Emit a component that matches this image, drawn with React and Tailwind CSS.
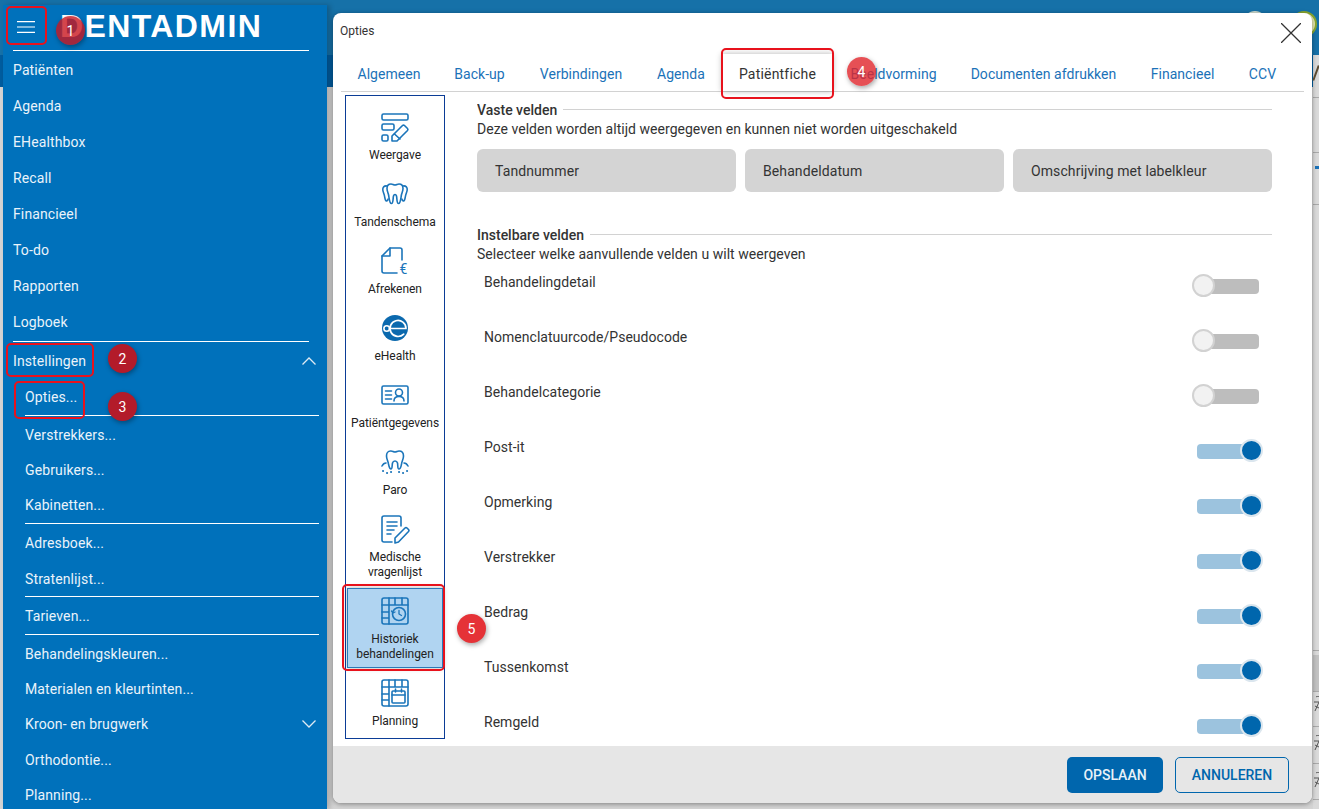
import React from 'react';

const menuTop = ['Patiënten', 'Agenda', 'EHealthbox', 'Recall', 'Financieel', 'To-do', 'Rapporten', 'Logboek'];

const tabs = [
  ['Algemeen', 'w-[96px]'],
  ['Back-up', 'w-[85px]'],
  ['Verbindingen', 'w-[118px]'],
  ['Agenda', 'w-[82px]'],
  ['Patiëntfiche', 'w-[111px]'],
  ['Beeldvorming', 'w-[121px]'],
  ['Documenten afdrukken', 'w-[179px]'],
  ['Financieel', 'w-[99px]'],
  ['CCV', 'w-[61px]'],
];

const fields = [
  ['Behandelingdetail', false],
  ['Nomenclatuurcode/Pseudocode', false],
  ['Behandelcategorie', false],
  ['Post-it', true],
  ['Opmerking', true],
  ['Verstrekker', true],
  ['Bedrag', true],
  ['Tussenkomst', true],
  ['Remgeld', true],
];

function Icon({ children }) {
  return (
    <svg viewBox="0 0 30 30" fill="none" stroke="#1b75ba" strokeWidth="1.6" strokeLinejoin="round" strokeLinecap="round" className="w-[30px] h-[30px] shrink-0">
      {children}
    </svg>
  );
}

const icons = {
  weergave: (
    <Icon>
      <rect x="2" y="2" width="26" height="6" rx="1.5" />
      <rect x="2" y="12" width="12" height="6" rx="1.5" />
      <rect x="2" y="23" width="6" height="6" rx="1.5" />
      <path d="M12 29v-5L22.500 13.500a1.500 1.500 0 0 1 2 0l3 3a1.500 1.500 0 0 1 0 2L17 29z" />
      <path d="M14.500 22l5.500 5" />
    </Icon>
  ),
  tand: (
    <Icon>
      <path d="M11 5c1.500 0 2.500 1 4 1s2.500-1 4-1c2.500 0 4 2 4 4.500 0 2.500-1.200 4.500-1.700 7-.4 2.500-.8 8-2.800 8s-1.300-5-2-7.500c-.3-1-.7-1.500-1.500-1.500s-1.200.5-1.500 1.500c-.7 2.500 0 7.500-2 7.500s-2.400-5.500-2.800-8C8.200 14 7 12 7 9.500 7 7 8.500 5 11 5z" />
      <path d="M7 7C4 6.500 2.500 8.500 2.800 11c.3 2.500 1.500 4 1.800 6.500.3 2 .5 4 1.700 4.500 1 .3 1.500-.8 1.800-2" />
      <path d="M23 7c3-.5 4.500 1.500 4.200 4-.3 2.500-1.500 4-1.800 6.500-.3 2-.5 4-1.700 4.500-1 .3-1.500-.8-1.800-2" />
    </Icon>
  ),
  afrekenen: (
    <Icon>
      <path d="M10 2h10a2 2 0 0 1 2 2v10M10 2L2 10v15a2 2 0 0 0 2 2h13" />
      <path d="M10 2v8H2" />
      <text x="19.500" y="28" fontSize="14" fill="#1b75ba" stroke="none" fontFamily="Roboto, sans-serif">€</text>
    </Icon>
  ),
  ehealth: (
    <Icon>
      <circle cx="15" cy="15" r="13" fill="#0b69ae" stroke="none" />
      <circle cx="6.700" cy="15.500" r="2.800" stroke="#fff" />
      <path d="M9.500 15.500H26a8 8 0 1 0-2.300 5.600" stroke="#fff" strokeWidth="1.700" />
    </Icon>
  ),
  patient: (
    <Icon>
      <rect x="2" y="6" width="26" height="18" rx="1.500" />
      <path d="M5.500 11h6M5.500 15h6M5.500 19h6" />
      <circle cx="19" cy="12.500" r="3.500" />
      <path d="M14 21c0-3 2-4.500 5-4.500s5 1.500 5 4.500" />
    </Icon>
  ),
  paro: (
    <Icon>
      <path d="M11 4c1.500 0 2.500 1 4 1s2.500-1 4-1c3 0 4.500 2 4.500 5 0 3-1.500 5-2 8-.4 2-.8 5-2.500 5s-1-4-1.500-6c-.3-1-1-2-2.500-2s-2.200 1-2.500 2c-.5 2-.1 6-1.500 6s-2.100-3-2.500-5c-.5-3-2-5-2-8 0-3 1.500-5 4-5z" />
      <path d="M2 19c1-2 2.500-3 4-3M28 19c-1-2-2.500-3-4-3" />
      <path d="M3 24h.1M7 26h.1M11 25h.1M19 25h.1M23 26h.1M27 24h.1" strokeWidth="2" />
    </Icon>
  ),
  medisch: (
    <Icon>
      <path d="M21 12V4a2 2 0 0 0-2-2H4a2 2 0 0 0-2 2v22a2 2 0 0 0 2 2h8" />
      <path d="M7 8h10M7 12h10M7 16h7M7 20h4" />
      <path d="M15 29v-5l10-10a1.500 1.500 0 0 1 2 0l1.500 1.500a1.500 1.500 0 0 1 0 2L18.500 28z" />
    </Icon>
  ),
  historiek: (
    <Icon>
      <path d="M11 28H4a2 2 0 0 1-2-2V4a2 2 0 0 1 2-2h22a2 2 0 0 1 2 2v22a2 2 0 0 1-2 2H11z" />
      <path d="M2 9h26M9 2v26M15 2v7M22 2v7M2 16h7M2 22h7" />
      <circle cx="19" cy="18" r="6.500" />
      <path d="M19 14.500V18l2.500 1.500M11.500 15l1.500 2 2-1" strokeWidth="1.300" />
    </Icon>
  ),
  planning: (
    <Icon>
      <path d="M9 28H4a2 2 0 0 1-2-2V4a2 2 0 0 1 2-2h22a2 2 0 0 1 2 2v22a2 2 0 0 1-2 2z" />
      <path d="M2 9h26M9 2v26M15 2v7M22 2v7M2 16h7M2 22h7" />
      <rect x="12" y="13" width="13" height="12" rx="1" />
      <path d="M12 17h13M15.500 11v3M21.500 11v3" />
    </Icon>
  ),
};

function SideItem({ icon, lines, className }) {
  return (
    <div className={`flex flex-col items-center text-xs leading-[15px] tracking-[-0.05px] text-[#222] ${className}`}>
      <div className="mb-[6px]">{icon}</div>
      {lines.map((l) => (
        <span key={l} className="whitespace-nowrap">{l}</span>
      ))}
    </div>
  );
}

function Toggle({ on }) {
  if (on) {
    return (
      <div className="relative w-[71px] h-[23px] mt-[2px]">
        <div className="absolute left-[5px] top-[5px] w-[60px] h-[15px] rounded-[4px] bg-[#9cc3de]" />
        <div className="absolute right-0 top-0 w-[23px] h-[23px] rounded-full bg-[#0066ad] border-2 border-[#dbe6ee]" />
      </div>
    );
  }
  return (
    <div className="relative w-[71px] h-[23px] mt-[2px]">
      <div className="absolute left-[5px] top-[5px] w-[62px] h-[15px] rounded-[4px] bg-[#bdbdbd]" />
      <div className="absolute left-0 top-0 w-[23px] h-[23px] rounded-full bg-[#f2f2f2] border-2 border-[#d2d2d2]" />
    </div>
  );
}

function SectionTitle({ children }) {
  return (
    <div className="flex items-center gap-[6px] h-5">
      <span className="text-sm font-medium text-[#333] whitespace-nowrap">{children}</span>
      <div className="flex-1 h-px bg-[#d2d2d2] mt-[-2px]" />
    </div>
  );
}

function Badge({ n, className }) {
  return (
    <div className={`absolute w-[29px] h-[29px] rounded-full flex items-center justify-center text-white text-sm shadow-[1px_2px_5px_rgba(0,0,0,0.35)] ${className}`}>
      {n}
    </div>
  );
}

function Mark({ className }) {
  return <div className={`absolute border-2 border-[#e8121c] rounded-[5px] ${className}`} />;
}

function MenuRow({ label, className }) {
  return <div className={`flex items-center pl-[22px] text-sm tracking-[0.12px] text-[#eaf3fa] ${className}`}>{label}</div>;
}

function Rule() {
  return <div className="h-px ml-[22px] mr-[8px] bg-white" />;
}

// scrap of the page behind the dialog, only its edge is visible
function Scribble() {
  return (
    <svg viewBox="0 0 6 16" className="w-[6px] h-4" fill="none" stroke="#555" strokeWidth="1">
      <path d="M3 1c1-1 3-1 3 0M1 6h5L2 15M2 10l4 2" />
    </svg>
  );
}

export default function App() {
  return (
    <div className="relative w-[1319px] h-[809px] overflow-hidden flex items-start font-['Roboto',sans-serif] bg-[linear-gradient(to_bottom,#1671a8_0,#1671a8_55px,#005c9e_55px,#005c9e_87px,#d4d4d4_87px)]">
      {/* drawer */}
      <aside className="ml-[3px] mt-[5px] w-[324px] h-[804px] shrink-0 overflow-hidden bg-[#0071bb] shadow-[3px_0_5px_rgba(0,0,0,0.2)]">
        <div className="flex items-center h-[45px]">
          <svg viewBox="0 0 20 16" className="ml-[14px] w-[18px] h-[16px] mt-[-1px]" stroke="#fff" strokeWidth="1.3" fill="none">
            <path d="M0 2h20M0 8h20M0 14h20" />
          </svg>
          <span className="ml-[25px] mt-[-3px] text-[32px] leading-none font-bold tracking-[1.4px] text-white font-['Liberation_Sans',sans-serif]">DENTADMIN</span>
        </div>
        <div className="h-px ml-[10px] mr-[18px] bg-white mb-px" />
        {menuTop.map((m) => (
          <MenuRow key={m} label={m} className="h-9 !pl-[10px]" />
        ))}
        <div className="h-px ml-[10px] mr-[18px] mt-px bg-white" />
        <div className="flex items-center justify-between h-9 pt-[2px] pl-[10px] pr-[11px] text-sm tracking-[0.12px] text-[#eaf3fa]">
          Instellingen
          <svg viewBox="0 0 14 8" className="w-[14px] h-2" fill="none" stroke="#dfeaf3" strokeWidth="1.3"><path d="M0.5 7.5L7 1l6.500 6.500" /></svg>
        </div>
        <MenuRow label="Opties..." className="h-[37px]" />
        <Rule />
        <MenuRow label="Verstrekkers..." className="h-[37px]" />
        <MenuRow label="Gebruikers..." className="h-[34px]" />
        <MenuRow label="Kabinetten..." className="h-9" />
        <Rule />
        <MenuRow label="Adresboek..." className="h-[38px]" />
        <MenuRow label="Stratenlijst..." className="h-[34px]" />
        <Rule />
        <MenuRow label="Tarieven..." className="h-[37px]" />
        <Rule />
        <MenuRow label="Behandelingskleuren..." className="h-[38px]" />
        <MenuRow label="Materialen en kleurtinten..." className="h-8" />
        <div className="flex items-center justify-between h-[38px] pl-[22px] pr-[11px] text-sm tracking-[0.12px] text-[#eaf3fa]">
          Kroon- en brugwerk
          <svg viewBox="0 0 14 8" className="w-[14px] h-2" fill="none" stroke="#dfeaf3" strokeWidth="1.3"><path d="M0.5 0.5L7 7l6.500-6.500" /></svg>
        </div>
        <MenuRow label="Orthodontie..." className="h-[34px]" />
        <MenuRow label="Planning..." className="h-9" />
      </aside>

      {/* avatars of the top bar, behind the dialog */}
      <div className="absolute left-[1244px] top-[11px] w-[22px] h-[22px] rounded-full bg-[#cfdccf]" />
      <div className="absolute left-[1291px] top-[11px] w-[26px] h-[26px] rounded-full bg-[#e4e8b0] border-2 border-[#8aa82e]" />

      {/* dialog */}
      <section className="relative ml-[6px] mt-[13px] w-[979px] h-[790px] shrink-0 flex flex-col overflow-hidden bg-white rounded-lg shadow-[0_1px_5px_rgba(0,0,0,0.4)]">
        <header className="flex justify-between h-[41px] shrink-0">
          <span className="ml-[7px] mt-[10px] text-xs leading-4 text-[#333]">Opties</span>
          <svg viewBox="0 0 20 20" className="mt-[10px] mr-[11px] w-5 h-5" stroke="#333" strokeWidth="1.3" fill="none">
            <path d="M0 0l20 20M20 0L0 20" />
          </svg>
        </header>

        <nav className="flex mx-2 h-[38px] shrink-0 border-b border-[#d2d2d2]">
          {tabs.map(([t, w]) =>
            t === 'Patiëntfiche' ? (
              <div key={t} className={`flex items-center justify-center pt-[2px] text-sm tracking-[0.2px] text-[#333] bg-white shadow-[0_0_6px_rgba(0,0,0,0.3)] whitespace-nowrap ${w}`}>{t}</div>
            ) : (
              <div key={t} className={`flex items-center justify-center pt-[2px] text-sm tracking-[0.05px] text-[#1b72b8] whitespace-nowrap ${w}`}>{t}</div>
            )
          )}
        </nav>

        <div className="flex flex-1 min-h-0">
          <div className="ml-3 mt-[3px] w-[100px] h-[644px] shrink-0 border border-[#0b3c96]">
            <SideItem icon={icons.weergave} lines={['Weergave']} className="pt-4 h-[67px]" />
            <SideItem icon={icons.tand} lines={['Tandenschema']} className="pt-4 h-[67px]" />
            <SideItem icon={icons.afrekenen} lines={['Afrekenen']} className="pt-4 h-[67px]" />
            <SideItem icon={icons.ehealth} lines={['eHealth']} className="pt-4 h-[67px]" />
            <SideItem icon={icons.patient} lines={['Patiëntgegevens']} className="pt-4 h-[67px]" />
            <SideItem icon={icons.paro} lines={['Paro']} className="pt-4 h-[67px]" />
            <SideItem icon={icons.medisch} lines={['Medische', 'vragenlijst']} className="pt-4 h-[82px]" />
            <SideItem icon={icons.historiek} lines={['Historiek', 'behandelingen']} className="mt-2 mx-px pt-[7px] h-20 bg-[#b0d4f1] border border-[#2a7ab8] shadow-[0_0_5px_rgba(0,0,0,0.3)]" />
            <SideItem icon={icons.planning} lines={['Planning']} className="pt-[10px]" />
          </div>

          <div className="ml-8 mt-2 w-[795px] overflow-hidden">
            <SectionTitle>Vaste velden</SectionTitle>
            <p className="text-sm leading-5 tracking-[0.03px] text-[#333] mt-[-1px]">Deze velden worden altijd weergegeven en kunnen niet worden uitgeschakeld</p>
            <div className="grid grid-cols-3 gap-[9px] mt-[10px]">
              {['Tandnummer', 'Behandeldatum', 'Omschrijving met labelkleur'].map((c) => (
                <div key={c} className="flex items-center h-[43px] pl-[18px] rounded-md bg-[#d4d4d4] text-sm tracking-[0.1px] text-[#333]">{c}</div>
              ))}
            </div>
            <div className="mt-[33px]">
              <SectionTitle>Instelbare velden</SectionTitle>
            </div>
            <p className="text-sm leading-5 tracking-[0.04px] text-[#333] mt-[-1px]">Selecteer welke aanvullende velden u wilt weergeven</p>
            <div className="mt-2">
              {fields.map(([label, on]) => (
                <div key={label} className="flex justify-between h-[55px] pl-[7px] pr-[9px]">
                  <span className="text-sm leading-5 tracking-[0.03px] text-[#333]">{label}</span>
                  <Toggle on={on} />
                </div>
              ))}
            </div>
          </div>
        </div>

        <footer className="flex justify-end items-center gap-3 h-[57px] shrink-0 pr-[23px] bg-[#e6e6e6]">
          <button className="w-[96px] h-9 rounded-[5px] bg-[#0066ad] text-sm font-medium text-[#e8f1f8]">OPSLAAN</button>
          <button className="w-[114px] h-9 rounded-[5px] border border-[#0066ad] text-sm font-medium text-[#0066ad]">ANNULEREN</button>
        </footer>
      </section>

      {/* edge of the page behind the dialog */}
      <div className="mt-[55px] ml-px flex-1 h-[754px] flex flex-col bg-[#dadada]">
        <div className="h-[43px] shrink-0 pt-[10px] border-b border-[#aaa]">
          <div className="w-[2px] h-[16px] ml-[2px] rotate-[20deg] bg-[#5b4a30]" />
        </div>
        <div className="h-[55px] shrink-0 border-b border-[#aaa]" />
        <div className="h-[52px] shrink-0 border-b border-[#aaa] pt-[13px]">
          <div className="w-[4px] h-[3px] ml-[2px] bg-[#1b72b8]" />
        </div>
        <div className="h-[446px] shrink-0 border-b border-[#aaa]" />
        <div className="h-[41px] shrink-0 pt-1 border-b border-[#aaa]">
          <div className="h-[36px] bg-[#c2c2c2]" />
        </div>
        <div className="h-[35px] shrink-0 border-b border-[#aaa] pt-1"><Scribble /></div>
        <div className="h-[37px] shrink-0 border-b border-[#aaa] pt-[8px]"><Scribble /></div>
        <div className="h-[36px] shrink-0 border-b border-[#aaa] pt-[8px]"><Scribble /></div>
      </div>

      {/* callouts */}
      <Mark className="left-[6px] top-[6px] w-[41px] h-[39px]" />
      <Mark className="left-[6px] top-[343px] w-[88px] h-[34px]" />
      <Mark className="left-[14px] top-[381px] w-[71px] h-[38px]" />
      <Mark className="left-[721px] top-[48px] w-[113px] h-[51px]" />
      <Mark className="left-[342px] top-[584px] w-[103px] h-[87px]" />
      <Badge n="1" className="left-[56px] top-[16px] bg-[#c9161f]/80" />
      <Badge n="2" className="left-[108px] top-[344px] bg-[#b31b2a]" />
      <Badge n="3" className="left-[108px] top-[392px] bg-[#b31b2a]" />
      <Badge n="4" className="left-[847px] top-[57px] bg-[#e0242b]/80" />
      <Badge n="5" className="left-[457px] top-[614px] bg-[#e53237]" />
    </div>
  );
}
